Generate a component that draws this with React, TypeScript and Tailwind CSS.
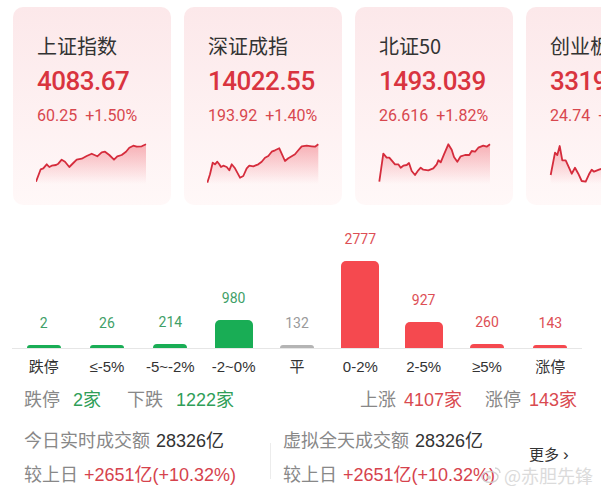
import React from "react";

type Pt = [number, number];

const c1: Pt[] = [[0,39.7],[4.7,27.3],[7.3,26.3],[10.7,22.3],[13.3,25],[15.7,23.7],[20,23],[22.3,21.7],[25.7,17.7],[29,19.7],[33.3,25],[37.3,21],[40.7,17.7],[45.7,16.7],[50.7,14],[55.7,11.7],[61.3,14.3],[65.7,10.3],[69,9.7],[73.3,13],[78,17.7],[81.3,14.3],[85.7,13],[90,9.7],[93.3,5.7],[97.3,3.7],[100.7,4.7],[105.7,4.3],[110,2.3]];
const c2: Pt[] = [[0.3,40.7],[3,32.3],[5.7,20.7],[8,22.3],[10.3,19.7],[12.3,22.3],[14,25],[16.3,23.7],[19.7,25],[22.3,28.3],[24.7,22.3],[28,26.3],[33,35.7],[36.3,34],[39.7,26.3],[42.3,23.7],[46.3,24.3],[51.3,22.3],[54.7,19.7],[58,15.7],[61.3,14],[64.7,9.7],[68,8.3],[72.3,6.3],[78,19],[81.3,16.3],[84.7,14.3],[88,12.3],[91.3,8.3],[94.7,4.3],[99.7,3.7],[104.7,4.3],[108,4.7],[111.3,2.3]];
const c3: Pt[] = [[1.3,39.7],[5.3,11.7],[8.7,15.7],[11.3,15.7],[14.7,19.7],[17,22.3],[20.3,22.3],[22.7,25.7],[25.3,23.7],[28.7,23],[31,21],[33.7,29],[37,33],[40.3,28.3],[42.7,25.7],[45.3,27.7],[50.3,28.3],[55.3,26.3],[58.7,22.3],[60.3,18.3],[62.7,20.3],[66,12.3],[70.3,2.3],[73.7,7.7],[76,15],[79.3,19.7],[82.7,14.3],[87,13],[91.3,13],[93.7,9],[97,9.7],[100.3,5.7],[105.3,3.7],[108.7,4.7],[112,2.3]];
const c4: Pt[] = [[1.7,33],[6,10.7],[8.3,13],[10.7,4],[13.3,18.3],[16.7,18.3],[20,25.7],[22.7,31.7],[26,25.7],[29.3,31.7],[32.7,39],[36.7,39.7],[40,32.3],[42.7,27.7],[45,29.7],[50,27.7],[55,26],[60,22],[65,24],[70,18],[75,15],[80,17],[85,12],[90,10],[95,8],[100,9],[105,6],[111,4]];

function Spark({ pts, id }: { pts: Pt[]; id: string }) {
  const line = pts.map((p, i) => `${i ? "L" : "M"}${p[0]},${p[1]}`).join(" ");
  const last = pts[pts.length - 1];
  const area = `${line} L${last[0]},42 L${pts[0][0]},42 Z`;
  return (
    <svg width="113" height="42" viewBox="0 0 113 42" className="block">
      <defs>
        <linearGradient id={id} x1="0" y1="0" x2="0" y2="1">
          <stop offset="0%" stopColor="#ec4a57" stopOpacity="0.4" />
          <stop offset="100%" stopColor="#ec4a57" stopOpacity="0" />
        </linearGradient>
      </defs>
      <path d={area} fill={`url(#${id})`} />
      <path d={line} fill="none" stroke="#d52c3c" strokeWidth="1.8" strokeLinejoin="round" />
    </svg>
  );
}

const cards = [
  { name: "上证指数", value: "4083.67", chg: "60.25", pct: "+1.50%", pts: c1 },
  { name: "深证成指", value: "14022.55", chg: "193.92", pct: "+1.40%", pts: c2 },
  { name: "北证50", value: "1493.039", chg: "26.616", pct: "+1.82%", pts: c3 },
  { name: "创业板指", value: "3319.26", chg: "24.74", pct: "+0.75%", pts: c4 },
];

const bars = [
  { label: "跌停", v: "2", h: 3, c: "g" },
  { label: "≤-5%", v: "26", h: 3, c: "g" },
  { label: "-5~-2%", v: "214", h: 4, c: "g" },
  { label: "-2~0%", v: "980", h: 28, c: "g" },
  { label: "平", v: "132", h: 3, c: "n" },
  { label: "0-2%", v: "2777", h: 87, c: "r" },
  { label: "2-5%", v: "927", h: 26, c: "r" },
  { label: "≥5%", v: "260", h: 4, c: "r" },
  { label: "涨停", v: "143", h: 3, c: "r" },
];

const numColor: Record<string, string> = { g: "text-[#3f9f68]", r: "text-[#dd4f55]", n: "text-[#9a9a9a]" };
const barColor: Record<string, string> = { g: "bg-[#19ad55]", r: "bg-[#f5494f]", n: "bg-[#b4b4b4]" };

const cjk = "font-['Liberation_Sans','Noto_Sans_CJK_SC',sans-serif]";

export default function App() {
  return (
    <div className={`w-[601px] h-[500px] bg-white overflow-hidden relative ${cjk}`}>
      {/* cards */}
      <div className="flex gap-[13px] pl-[13px] pt-[7px]">
        {cards.map((c, i) => (
          <div
            key={i}
            className="shrink-0 w-[158px] h-[198px] rounded-[10px] bg-gradient-to-b from-[#fce8ea] to-[#fff8f8] pl-[24px] pt-[25px]"
          >
            <div className="h-[28px] leading-[28px] text-[20px] text-[#333] font-['Noto_Sans_CJK_SC',sans-serif] whitespace-nowrap">
              {c.name}
            </div>
            <div className="mt-[5px] h-[32px] leading-[32px] text-[26px] font-medium tracking-[-0.5px] text-[#d9343f] font-['Roboto',sans-serif] whitespace-nowrap">
              {c.value}
            </div>
            <div className="mt-[9px] h-[20px] leading-[20px] text-[16px] text-[#d8474e] font-['Roboto',sans-serif] flex gap-[8px] whitespace-nowrap">
              <span>{c.chg}</span>
              <span>{c.pct}</span>
            </div>
            <div className="mt-[16px] -ml-[1px]">
              <Spark pts={c.pts} id={`g${i}`} />
            </div>
          </div>
        ))}
      </div>

      {/* distribution bars */}
      <div className="mt-[20px] ml-[12px] w-[570px]">
        <div className="grid grid-cols-9 h-[124px] border-b border-[#e6e6e6]">
          {bars.map((b, i) => (
            <div key={i} className="flex flex-col items-center justify-end">
              <div className={`text-[14px] leading-[16px] mb-[14px] font-['Roboto',sans-serif] ${numColor[b.c]}`}>{b.v}</div>
              <div
                className={`${barColor[b.c]} ${b.h > 10 ? "w-[38px] rounded-t-[5px]" : "w-[34px] rounded-t-full"}`}
                style={{ height: b.h }}
              />
            </div>
          ))}
        </div>
        <div className="grid grid-cols-9 mt-[8px] h-[20px]">
          {bars.map((b, i) => (
            <div key={i} className="text-center text-[15px] leading-[20px] text-[#333] whitespace-nowrap">
              {b.label}
            </div>
          ))}
        </div>
      </div>

      {/* counts */}
      <div className="mt-[11px] h-[24px] flex items-center text-[18px] leading-[24px] px-[24px]">
        <span className="text-[#888]">跌停</span>
        <span className="ml-[13px] text-[#2f9e58]">2家</span>
        <span className="ml-[26px] text-[#888]">下跌</span>
        <span className="ml-[13px] text-[#2f9e58]">1222家</span>
        <span className="ml-auto text-[#888]">上涨</span>
        <span className="ml-[8px] text-[#d94a50]">4107家</span>
        <span className="ml-[23px] text-[#888]">涨停</span>
        <span className="ml-[8px] text-[#d94a50]">143家</span>
      </div>

      {/* turnover */}
      <div className="mt-[17px] flex pl-[24px]">
        <div className="w-[246px] flex flex-col text-[18px] leading-[24px]">
          <div className="whitespace-nowrap">
            <span className="text-[#888]">今日实时成交额</span>
            <span className="ml-[6px] text-[#333]">28326亿</span>
          </div>
          <div className="mt-[10px] whitespace-nowrap">
            <span className="text-[#888]">较上日</span>
            <span className="ml-[6px] text-[#d6434d]">+2651亿(+10.32%)</span>
          </div>
        </div>
        <div className="w-px h-[36px] mt-[14px] bg-[#ececec]" />
        <div className="pl-[12px] flex flex-col text-[18px] leading-[24px] flex-1">
          <div className="whitespace-nowrap">
            <span className="text-[#888]">虚拟全天成交额</span>
            <span className="ml-[6px] text-[#333]">28326亿</span>
          </div>
          <div className="mt-[10px] whitespace-nowrap">
            <span className="text-[#888]">较上日</span>
            <span className="ml-[6px] text-[#d6434d]">+2651亿(+10.32%)</span>
          </div>
        </div>
      </div>

      {/* more */}
      <div className="absolute left-[529px] top-[445px] h-[20px] leading-[20px] text-[15px] text-[#333] flex items-center gap-[4px]">
        <span>更多</span>
        <span className="text-[17px]">›</span>
      </div>

      {/* watermark */}
      <div className="absolute left-[480px] top-[462px] h-[26px] flex items-center text-[18px] text-[#d8d8d8] font-['Noto_Sans_CJK_SC',sans-serif] opacity-90">
        <svg width="22" height="20" viewBox="0 0 22 20" className="mr-[2px]">
          <ellipse cx="10" cy="12" rx="8" ry="5.5" fill="none" stroke="#cfcfcf" strokeWidth="1.4" />
          <circle cx="9" cy="12.5" r="2" fill="#cfcfcf" />
          <path d="M15 3 a5 5 0 0 1 5 5" fill="none" stroke="#cfcfcf" strokeWidth="1.3" />
        </svg>
        <span>@赤胆先锋</span>
      </div>
    </div>
  );
}
